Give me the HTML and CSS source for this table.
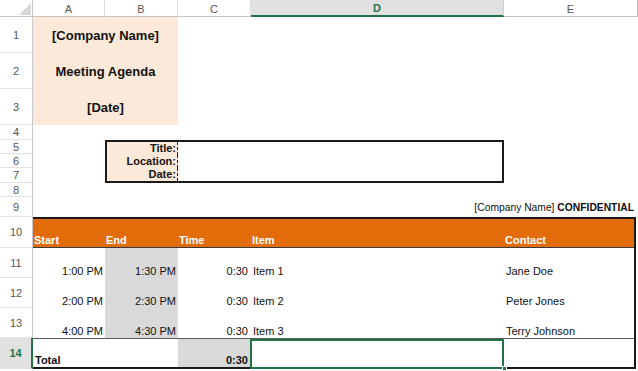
FILE: index.html
```html
<!DOCTYPE html>
<html>
<head>
<meta charset="utf-8">
<link rel="stylesheet" href="styles.css">
</head>
<body>
<div class="sheet">
  <div class="corner"><svg width="33" height="17" viewBox="0 0 33 17"><polygon points="31,3 31,15 19,15" fill="#d6d6d6"/></svg></div>
  <div class="colh">A</div>
  <div class="colh">B</div>
  <div class="colh">C</div>
  <div class="colh sel">D</div>
  <div class="colh last">E</div>

  <div class="gutter">
    <div class="rowh">1</div>
    <div class="rowh">2</div>
    <div class="rowh">3</div>
    <div class="rowh">4</div>
    <div class="rowh">5</div>
    <div class="rowh">6</div>
    <div class="rowh">7</div>
    <div class="rowh">8</div>
    <div class="rowh">9</div>
    <div class="rowh">10</div>
    <div class="rowh">11</div>
    <div class="rowh">12</div>
    <div class="rowh">13</div>
    <div class="rowh sel">14</div>
  </div>

  <div class="company">
    <div class="ctitle">[Company Name]</div>
    <div class="ctitle">Meeting Agenda</div>
    <div class="ctitle">[Date]</div>
  </div>

  <div class="infobox">
    <div class="ilabel">Title:</div><div class="ivalue"></div>
    <div class="ilabel">Location:</div><div class="ivalue"></div>
    <div class="ilabel">Date:</div><div class="ivalue"></div>
  </div>

  <div class="confidential">[Company Name] <b>CONFIDENTIAL</b></div>

  <div class="agenda">
    <div class="th">Start</div>
    <div class="th">End</div>
    <div class="th">Time</div>
    <div class="th">Item</div>
    <div class="th">Contact</div>

    <div class="td num">1:00 PM</div>
    <div class="td num shade">1:30 PM</div>
    <div class="td num">0:30</div>
    <div class="td">Item 1</div>
    <div class="td">Jane Doe</div>

    <div class="td num">2:00 PM</div>
    <div class="td num shade">2:30 PM</div>
    <div class="td num">0:30</div>
    <div class="td">Item 2</div>
    <div class="td">Peter Jones</div>

    <div class="td num">4:00 PM</div>
    <div class="td num shade">4:30 PM</div>
    <div class="td num">0:30</div>
    <div class="td">Item 3</div>
    <div class="td">Terry Johnson</div>

    <div class="tt span2">Total</div>
    <div class="tt num shade">0:30</div>
    <div class="tt active"><span class="handle"></span></div>
    <div class="tt"></div>
  </div>
</div>
</body>
</html>
```
FILE: styles.css
```css
* { box-sizing: border-box; }
html, body { margin: 0; padding: 0; background: #fff; }
body {
  width: 638px;
  height: 371px;
  overflow: hidden;
  font-family: "Liberation Sans", Arial, sans-serif;
  font-size: 11px;
  color: #111;
}
.sheet {
  display: grid;
  grid-template-columns: 33px 72px 73px 73px 253px 134px;
  grid-template-rows: 17px 36px 36px 36px 15px 14px 14px 15px 14px 20px 31px 30px 30px 30px 31px;
}
.corner {
  grid-row: 1;
  grid-column: 1;
  border-right: 1px solid #c8c8c8;
  border-bottom: 1px solid #c8c8c8;
  overflow: hidden;
}
.corner svg { display: block; }
.colh {
  grid-row: 1;
  display: flex;
  align-items: center;
  justify-content: center;
  color: #555;
  font-size: 11px;
  border-right: 1px solid #dcdcdc;
  border-bottom: 1px solid #c4c4c4;
  padding-top: 1px;
}
.colh.sel {
  background: #e1e1e1;
  color: #217346;
  font-weight: bold;
  border-bottom: 2px solid #217346;
  border-right: 1px solid #cfcfcf;
}
.colh.last { border-right: 1px solid #c4c4c4; }

.gutter {
  grid-row: 2 / 16;
  grid-column: 1;
  display: grid;
  grid-template-rows: 36px 36px 36px 15px 14px 14px 15px 14px 20px 31px 30px 30px 30px 31px;
  border-right: 1px solid #c8c8c8;
}
.rowh {
  display: flex;
  align-items: center;
  justify-content: center;
  color: #555;
  font-size: 11px;
  border-bottom: 1px solid #e2e2e2;
}
.rowh.sel {
  background: #e1e1e1;
  color: #217346;
  font-weight: bold;
  border-right: 2px solid #217346;
  margin-right: -1px;
}

.company {
  grid-row: 2 / 5;
  grid-column: 2 / 4;
  background: #fde9d9;
  display: grid;
  grid-template-rows: 36px 36px 36px;
}
.ctitle {
  display: flex;
  align-items: center;
  justify-content: center;
  font-weight: bold;
  font-size: 13px;
  color: #111;
}

.infobox {
  grid-row: 6 / 9;
  grid-column: 3 / 6;
  border: 2px solid #1a1a1a;
  display: grid;
  grid-template-columns: 71px 1fr;
  grid-template-rows: 13px 13px 13px;
}
.ilabel {
  background: #fde9d9;
  font-weight: bold;
  text-align: right;
  line-height: 13px;
  padding-right: 1px;
  border-right: 1px dashed #222;
}
.ivalue { background: #fff; }

.confidential {
  grid-row: 10;
  grid-column: 2 / 7;
  align-self: end;
  text-align: right;
  font-size: 10.3px;
  line-height: 12px;
  padding-right: 4px;
  padding-bottom: 3px;
  color: #111;
}
.confidential b { font-weight: bold; }

.agenda {
  grid-row: 11 / 16;
  grid-column: 2 / 7;
  margin-right: 2px;
  border-top: 2px solid #1a1a1a;
  border-right: 2px solid #1a1a1a;
  border-bottom: 2px solid #1a1a1a;
  display: grid;
  grid-template-columns: 72px 73px 73px 253px 1fr;
  grid-template-rows: 29px 30px 30px 30px 29px;
}
.th {
  background: #e26b0a;
  color: #fff;
  font-weight: bold;
  display: flex;
  align-items: flex-end;
  line-height: 13px;
  padding-left: 1px;
  border-bottom: 1px solid #3a3a3a;
}
.td {
  display: flex;
  align-items: flex-end;
  line-height: 13px;
  padding-left: 2px;
}
.num {
  justify-content: flex-end;
  padding-right: 2px;
  padding-left: 0;
}
.td:nth-child(5n+3).num { padding-right: 3px; }
.shade { background: #d9d9d9; }
.tt {
  display: flex;
  align-items: flex-end;
  line-height: 13px;
  font-weight: bold;
  padding-left: 2px;
  border-top: 1px solid #5a5a5a;
}
.tt.num { padding-left: 0; padding-right: 3px; }
.span2 { grid-column: span 2; }
.active { position: relative; }
.active::after {
  content: "";
  position: absolute;
  left: -1px;
  top: 0;
  right: 0;
  bottom: -2px;
  border: 2px solid #217346;
}
.handle {
  position: absolute;
  right: -3px;
  bottom: -4px;
  width: 5px;
  height: 5px;
  background: #217346;
  border: 1px solid #fff;
  z-index: 2;
}
```
